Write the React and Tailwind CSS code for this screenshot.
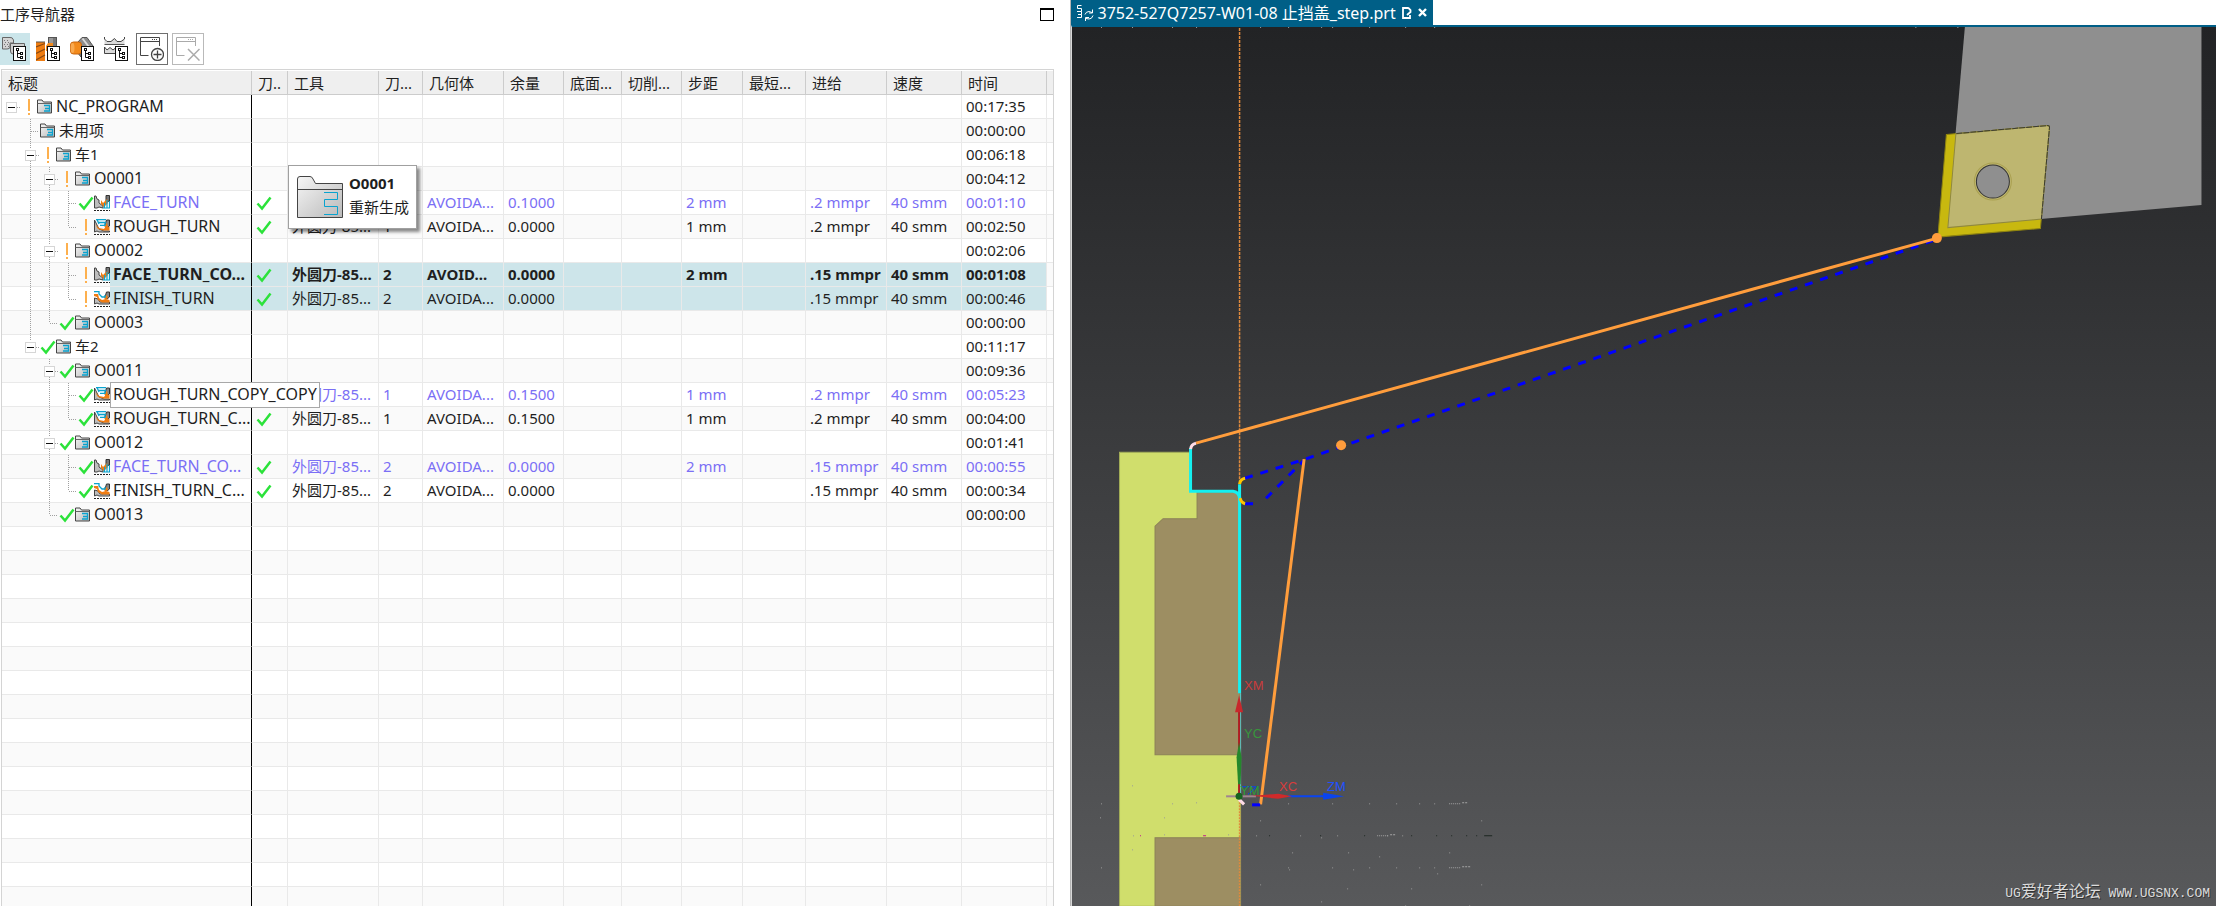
import { useState } from "react";

const columns = [
    { key: "title", label: "标题", width: "w-[250px]" },
    { key: "path", label: "刀..", width: "w-[36px]" },
    { key: "tool", label: "工具", width: "w-[91px]" },
    { key: "toolNo", label: "刀...", width: "w-[44px]" },
    { key: "geometry", label: "几何体", width: "w-[81px]" },
    { key: "stock", label: "余量", width: "w-[60px]" },
    { key: "floor", label: "底面...", width: "w-[58px]" },
    { key: "cut", label: "切削...", width: "w-[60px]" },
    { key: "step", label: "步距", width: "w-[61px]" },
    { key: "shortest", label: "最短...", width: "w-[63px]" },
    { key: "feed", label: "进给", width: "w-[81px]" },
    { key: "speed", label: "速度", width: "w-[75px]" },
    { key: "time", label: "时间", width: "w-[85px]" },
];

function op(title, icon, status, toolNo, stock, step, feed, time, extra) {
    return {
        title, icon, status, toolNo, stock, step, feed, time,
        tool: "外圆刀-85...",
        geometry: "AVOIDA...",
        speed: "40 smm",
        path: true,
        ...extra,
    };
}

const program = {
    title: "NC_PROGRAM", status: "warn", time: "00:17:35",
    children: [
        { title: "未用项", time: "00:00:00" },
        {
            title: "车1", status: "warn", time: "00:06:18",
            children: [
                {
                    title: "O0001", status: "warn", time: "00:04:12",
                    children: [
                        op("FACE_TURN", "face", "ok", "", "0.1000", "2 mm", ".2 mmpr", "00:01:10", { purple: true, tool: "" }),
                        op("ROUGH_TURN", "rough", "warn", "1", "0.0000", "1 mm", ".2 mmpr", "00:02:50"),
                    ],
                },
                {
                    title: "O0002", status: "warn", time: "00:02:06",
                    children: [
                        op("FACE_TURN_CO...", "face", "warn", "2", "0.0000", "2 mm", ".15 mmpr", "00:01:08", { bold: true, selected: true, geometry: "AVOID..." }),
                        op("FINISH_TURN", "finish", "warn", "2", "0.0000", "", ".15 mmpr", "00:00:46", { selected: true }),
                    ],
                },
                { title: "O0003", status: "ok", time: "00:00:00" },
            ],
        },
        {
            title: "车2", status: "ok", time: "00:11:17",
            children: [
                {
                    title: "O0011", status: "ok", time: "00:09:36",
                    children: [
                        op("ROUGH_TURN_COPY_COPY", "rough", "ok", "1", "0.1500", "1 mm", ".2 mmpr", "00:05:23", { purple: true, tip: true }),
                        op("ROUGH_TURN_C...", "rough", "ok", "1", "0.1500", "1 mm", ".2 mmpr", "00:04:00"),
                    ],
                },
                {
                    title: "O0012", status: "ok", time: "00:01:41",
                    children: [
                        op("FACE_TURN_CO...", "face", "ok", "2", "0.0000", "2 mm", ".15 mmpr", "00:00:55", { purple: true }),
                        op("FINISH_TURN_C...", "finish", "ok", "2", "0.0000", "", ".15 mmpr", "00:00:34"),
                    ],
                },
                { title: "O0013", status: "ok", time: "00:00:00" },
            ],
        },
    ],
};

const ROWS = 34;

// turns the tree into rows, each one knows which guide lines pass through it
function flatten(node, closed, id = "0", depth = 0, guides = [], last = true) {
    const rows = [{ ...node, id, depth, guides, last }];
    if (node.children && !closed[id]) {
        const next = depth === 0 ? [false] : [...guides, !last];
        node.children.forEach((child, i) => {
            rows.push(...flatten(child, closed, id + "." + i, depth + 1, next, i === node.children.length - 1));
        });
    }
    return rows;
}

function Check() {
    return (
        <svg width="16" height="16" viewBox="0 0 16 16" fill="none">
            <path d="M1.5 8.5 L6 13.5 L14.5 2.5" stroke="#2be23a" strokeWidth="2.5" />
        </svg>
    );
}

function Warn() {
    return (
        <svg width="16" height="16" viewBox="0 0 16 16" fill="#fdb04e">
            <rect x="7" y="0" width="2" height="12" />
            <rect x="7" y="14" width="2" height="2" />
        </svg>
    );
}

function Folder() {
    return (
        <svg width="15" height="15" viewBox="0 0 15 15">
            <defs>
                <linearGradient id="folder" x1="0" y1="0" x2="1" y2="1">
                    <stop offset="0" stopColor="#f6f6f6" />
                    <stop offset="1" stopColor="#b9b9b9" />
                </linearGradient>
            </defs>
            <path d="M.5 14 V1 H5 L6.5 3 H14.5 V14 Z" fill="url(#folder)" stroke="#444" />
            <path d="M.5 4.5 H14.5" stroke="#666" />
            <path d="M7 6.5 H12.5 V9.5 H8 M12.5 9.5 V12 H7" fill="none" stroke="#0aa3cf" strokeWidth="1.3" />
        </svg>
    );
}

function BigFolder() {
    return (
        <svg width="46" height="42" viewBox="0 0 46 42">
            <path d="M.5 41.5 V3 Q.5 .5 3 .5 H13 Q15 .5 16 3 L18.5 7.5 H45.5 V41.5 Z" fill="url(#folder)" stroke="#444" />
            <path d="M.5 13.5 H45.5" stroke="#444" />
            <path d="M27 16.5 H40.5 V23.5 H27.5 V30.5 H40.5 V38.5 H27" fill="none" stroke="#0aa3cf" />
        </svg>
    );
}

function OpIcon({ kind }) {
    return (
        <svg width="16" height="16" viewBox="0 0 16 16">
            {kind === "face" && (
                <>
                    <path d="M.5 13 V1 L2 1 L3 4 L5 5 V8 L9 11 V13 L5 12 L3 13 Z" fill="#bdbdbd" stroke="#444" />
                    <path d="M12 .5 H15.5 V6 L12 7 Z" fill="#777" stroke="#333" />
                    <path d="M7 5 L9 8 L13 4 L14 8 L10 12 L7 9 Z" fill="#f07c12" />
                    <path d="M10.5 13 V8 M13 13 V5 M15.5 13 V6 M9 13 H16" stroke="#0aa3cf" strokeWidth="1.2" />
                </>
            )}
            {kind === "rough" && (
                <>
                    <path d="M.5 13 V1 L3 6 L5 10 L10 12 H15.5 V13 H5 L3 12 Z" fill="#bdbdbd" stroke="#444" />
                    <path d="M12.5 1 H15.5 V7 L12 9 L11 6 Z" fill="#888" stroke="#333" />
                    <path d="M1 5 L5 9 L10 10 L12 7 L15.5 8 V11.5 H9 L4 10 Z" fill="#f07c12" />
                    <path d="M10 7 L13 4 L14 8 L12 9 Z" fill="#f07c12" />
                    <path d="M2 .7 H12 M4 3.5 H12 M6 6.3 H11 M3 .5 L5 5 M11 3 V7" stroke="#0aa3cf" fill="none" strokeWidth="1.3" />
                </>
            )}
            {kind === "finish" && (
                <>
                    <path d="M.5 13 V7 L4 8 L6 11 H15.5 V13 H5 L3 12 Z" fill="#bdbdbd" stroke="#444" />
                    <path d="M12.5 1 H15.5 V6 L13 8 L11 6 Z" fill="#888" stroke="#333" />
                    <path d="M0 3 H4 L5 7 L8 9 L12 8 L15.5 9 V11.5 H8 L4 9 L3 6 L0 5 Z" fill="#f07c12" />
                    <path d="M10 6 L13 4 L14 7 L11 9 Z" fill="#f07c12" />
                    <path d="M0 .7 H5 V3 L8 6 H11 V4" stroke="#0aa3cf" fill="none" strokeWidth="1.3" />
                </>
            )}
            <path d="M0 15.5 H16" stroke="#222" strokeDasharray="2 1" />
        </svg>
    );
}

function TreeBadge() {
    return (
        <>
            <rect x="11.5" y="9.5" width="12" height="14" fill="#fff" stroke="#111" />
            <path d="M15.5 13 V20.5 H19 M15.5 16.5 H19" fill="none" stroke="#111" />
            <rect x="14.5" y="11.5" width="2" height="2" fill="#fff" stroke="#111" />
            <rect x="18.5" y="15.5" width="2" height="2" fill="#fff" stroke="#111" />
            <rect x="18.5" y="19.5" width="2" height="2" fill="#fff" stroke="#111" />
        </>
    );
}

function ProgramViewIcon() {
    return (
        <svg width="24" height="24" viewBox="0 0 24 24">
            <path d="M.5 .5 H8 Q10.5 0 11.5 3 V6 H8 V10 Q8 12 5 12 H.5 Z" fill="#d4d4d4" stroke="#666" />
            <path d="M8.5 6.5 H22.5 V17 H11 Q8.5 17 8.5 14 Z" fill="#cfcfcf" stroke="#666" />
            <path d="M2 3.5 H8 M3 5.5 H8 M2 7.5 H7 M3 9.5 H7" stroke="#777" strokeDasharray="1 2" />
            <path d="M11 9.5 H21" stroke="#777" strokeDasharray="1 2" />
            <TreeBadge />
        </svg>
    );
}

function ToolViewIcon() {
    return (
        <svg width="24" height="24" viewBox="0 0 24 24">
            <rect x="12.5" y=".5" width="8" height="12" fill="#999" stroke="#555" />
            <path d="M17 1 H20 V10 H17 Z" fill="#777" />
            <path d="M10 9 L12 6 H17 V14 H10 Z" fill="#f28a1c" />
            <path d="M0 5 H9 V24 H0 Z" fill="#ef7d12" />
            <path d="M0 10 L9 6.5 M0 16.5 L9 12 M0 23 L9 18" stroke="#8a4a12" strokeWidth="1.3" />
            <path d="M0 5 H9" stroke="#555" />
            <TreeBadge />
        </svg>
    );
}

function GeometryViewIcon() {
    return (
        <svg width="24" height="24" viewBox="0 0 24 24">
            <path d="M8 5 L12 .5 H17 L23 9 V12 H11 V20 L7 15 Z" fill="#8c8c8c" stroke="#555" />
            <path d="M12.5 1.5 L19 10" stroke="#d8d8d8" strokeWidth="2" />
            <rect x=".5" y="5" width="11" height="12" rx="3" fill="#f28a1c" stroke="#c9640c" />
            <ellipse cx="2.5" cy="11" rx="2" ry="5" fill="#f9a94f" />
            <TreeBadge />
        </svg>
    );
}

function MethodViewIcon() {
    return (
        <svg width="24" height="24" viewBox="0 0 24 24">
            <path d="M.5 2 L3 4.5 H7 L10.5 1.5 L13 4.5 H17 L20.5 2 V7.5 H.5 Z" fill="#dcdcdc" />
            <path d="M.5 0 V2 L3 4.5 H7 L10.5 1.5 L13 4.5 H17 L20.5 2 V0" fill="none" stroke="#444" />
            <path d="M.5 7.5 H20.5" stroke="#555" />
            <path d="M.5 16.5 V10 L3 13 L6 10.5 L9 13 L12 10.5 V16.5 Z" fill="#dcdcdc" stroke="#444" />
            <TreeBadge />
        </svg>
    );
}

function WindowIcon({ kind }) {
    const color = kind === "add" ? "#444" : "#aaa";
    return (
        <svg width="24" height="24" viewBox="0 0 24 24" fill="none" stroke={color}>
            <path d="M8.5 18.5 H.5 V.5 H19.5 V9" />
            <path d="M.5 4.5 H19.5" />
            <path d="M12 2.5 H18" strokeDasharray="1 1" />
            {kind === "add" ? (
                <>
                    <circle cx="17.5" cy="17.5" r="6" strokeWidth="1.3" />
                    <path d="M17.5 13.5 V21.5 M13.5 17.5 H21.5" strokeWidth="1.3" />
                </>
            ) : (
                <path d="M12 12 L23.5 23.5 M23.5 12 L12 23.5" strokeWidth="1.5" />
            )}
        </svg>
    );
}

function Toolbar() {
    return (
        <div className="flex h-8 items-center gap-1">
            <div className="flex items-center gap-0.5">
                <button aria-label="程序顺序视图" className="flex h-8 w-[30px] items-center justify-end bg-[#cbe5ea] pr-1">
                    <ProgramViewIcon />
                </button>
                <button aria-label="机床视图" className="flex size-8 items-center justify-center"><ToolViewIcon /></button>
                <button aria-label="几何视图" className="flex size-8 items-center justify-center"><GeometryViewIcon /></button>
                <button aria-label="加工方法视图" className="flex size-8 items-center justify-center"><MethodViewIcon /></button>
            </div>
            <button aria-label="新建" className="flex size-8 items-center justify-center border border-[#6f6f6f]"><WindowIcon kind="add" /></button>
            <button aria-label="删除" disabled className="flex size-8 items-center justify-center border border-[#b9b9b9]"><WindowIcon kind="remove" /></button>
        </div>
    );
}

function Guide({ line }) {
    return (
        <svg width="19" height="23" className="shrink-0" stroke="#a0a0a0" strokeDasharray="1 1">
            {line && <path d="M9.5 0 V23" />}
        </svg>
    );
}

function NodeSlot({ row, onToggle }) {
    if (row.children) {
        return (
            <button aria-label={row.title} onClick={onToggle} className="shrink-0">
                <svg width="19" height="23" fill="none">
                    <g stroke="#a0a0a0" strokeDasharray="1 1">
                        {row.depth > 0 && <path d="M9.5 0 V6" />}
                        {!row.last && <path d="M9.5 18 V23" />}
                        <path d="M15 12.5 H19" />
                    </g>
                    <rect x="4.5" y="7.5" width="10" height="10" fill="#fff" stroke="#d6d6d6" />
                    <path d="M6 12.5 H13" stroke="#111" />
                </svg>
            </button>
        );
    }
    return (
        <svg width="19" height="23" className="shrink-0" fill="none" stroke="#a0a0a0" strokeDasharray="1 1">
            <path d={row.last ? "M9.5 0 V12" : "M9.5 0 V23"} />
            <path d="M10 12.5 H18" />
        </svg>
    );
}

function TitleCell({ row, onToggle }) {
    // latin names are set one size up from the chinese ones
    const latin = /^[A-Z]/.test(row.title);

    return (
        <div className={"flex h-[23px] items-center " + (latin ? "text-base" : "")}>
            {row.guides.map((line, i) => <Guide key={i} line={line} />)}
            <NodeSlot row={row} onToggle={onToggle} />
            {row.status && (
                <span className="w-4 shrink-0">{row.status === "ok" ? <Check /> : <Warn />}</span>
            )}
            <span className="w-4 shrink-0">{row.icon ? <OpIcon kind={row.icon} /> : <Folder />}</span>
            <span className={"relative h-full flex-1 pl-[3px] leading-[23px] " + (row.selected ? "bg-[#cde5ea]" : "")}>
                {row.tip ? (
                    <span className="absolute -top-px left-0 z-10 h-[26px] border border-[#a8a8a8] bg-white px-0.5 leading-[23px] text-[#1f1f1f]">{row.title}</span>
                ) : row.title}
            </span>
        </div>
    );
}

function OperationTable() {
    const [closed, setClosed] = useState({});
    const rows = flatten(program, closed);
    const filler = Array.from({ length: Math.max(0, ROWS - rows.length) }, (_, i) => ({ id: "empty" + i }));

    function toggle(id) {
        setClosed(prev => ({ ...prev, [id]: !prev[id] }));
    }

    return (
        <table className="w-full table-fixed border-separate border-spacing-0 whitespace-nowrap">
            <thead>
                <tr className="h-6 bg-[#efefef] text-left">
                    {columns.map(col => (
                        <th key={col.key} className={"overflow-hidden border-r border-b border-[#cccccc] p-0 pl-1.5 font-normal leading-[22px] " + col.width}>{col.label}</th>
                    ))}
                    <th className="border-b border-[#cccccc] p-0"></th>
                </tr>
            </thead>
            <tbody>
                {[...rows, ...filler].map((row, i) => (
                    <tr key={row.id} className={"h-6 " + (i % 2 ? "bg-[#fafafa] " : "bg-white ") + (row.purple ? "text-[#7b6ff5] " : "") + (row.bold ? "font-bold" : "")}>
                        <td className="border-r border-b border-r-black border-b-[#e9e9e9] p-0">
                            {row.title && <TitleCell row={row} onToggle={() => toggle(row.id)} />}
                        </td>
                        {columns.slice(1).map(col => (
                            <td key={col.key} className={"overflow-hidden border-r border-b border-[#e9e9e9] p-0 pl-1 leading-[23px] " + (row.selected ? "bg-[#cde5ea]" : "")}>
                                {col.key === "path" ? row.path && <Check /> : row[col.key]}
                            </td>
                        ))}
                        <td className="border-b border-[#e9e9e9] p-0"></td>
                    </tr>
                ))}
            </tbody>
        </table>
    );
}

function Navigator() {
    return (
        <section className="flex min-w-0 flex-[1070] flex-col overflow-hidden bg-white">
            <header className="flex h-[33px] items-start justify-between pr-4 pt-0.5">
                <h1 className="leading-6">工序导航器</h1>
                <button aria-label="最大化" className="mt-1.5 h-[13px] w-3.5 border border-t-2 border-black"></button>
            </header>
            <Toolbar />
            <div className="relative mt-1 mr-4 ml-px min-h-0 flex-1 border border-b-0 border-[#d4d4d4] p-px px-0">
                <OperationTable />
                <div className="absolute top-[95px] left-[286px] z-20 flex h-16 w-[129px] items-center gap-1.5 border border-[#a0a0a0] bg-white pl-2 shadow-[3px_3px_3px_rgba(0,0,0,0.45)]">
                    <BigFolder />
                    <div className="pb-1 leading-6">
                        <div className="font-bold">O0001</div>
                        <div>重新生成</div>
                    </div>
                </div>
            </div>
        </section>
    );
}

const specks = [
    [1132, 785], [1172, 803], [1196, 802], [1164, 817], [1164, 834], [1228, 834], [1132, 849], [1133, 835],
    [1288, 803], [1332, 803], [1369, 803], [1396, 803], [1419, 803], [1434, 803], [1260, 820], [1481, 820],
    [1256, 835], [1300, 835], [1337, 835], [1387, 835], [1402, 835], [1321, 837], [1292, 852], [1348, 852],
    [1449, 852], [1379, 856], [1101, 867], [1288, 867], [1289, 869], [1332, 867], [1353, 869], [1369, 867],
    [1396, 867], [1419, 867], [1434, 867], [1437, 873], [1260, 884], [1481, 884], [1347, 888], [1411, 888],
    [1321, 901], [1101, 803], [1100, 817], [1405, 905], [1469, 905],
    [1101, 27], [1132, 27], [1172, 27], [1196, 27], [1260, 27], [1288, 27], [1321, 27], [1332, 27], [1369, 27], [1405, 27],
    [1434, 27], [1915, 27], [1957, 27],
];

function Viewport() {
    return (
        <svg viewBox="1072 27 1144 879" preserveAspectRatio="xMinYMin slice" className="size-full" fontFamily="Liberation Sans, sans-serif" fontSize="13">
            <path d="M1239.5 28 V484" stroke="#e08a3c" strokeWidth="1.5" strokeDasharray="3 1" />

            {/* part section */}
            <path d="M1119.5 452 H1191 V491 H1236 L1240.5 496 V906 H1119.5 Z" fill="#d0de6c" stroke="#a3ad58" />
            <path d="M1197 492 H1240 V754.5 H1155 V526 L1163 518.5 H1197 Z" fill="#9d8e62" stroke="#8c8158" />
            <path d="M1155 837.5 H1240 V906 H1155 Z" fill="#9d8e62" stroke="#8c8158" />
            <path d="M1239.5 796 V906" stroke="#e08a3c" strokeWidth="1.5" strokeDasharray="2 1" />

            {/* holder and insert */}
            <path d="M1964.5 27 H2201 V205 L1947 227 Z" fill="#8f8f8f" />
            <path d="M1946 134.5 L2047 125.5 Q2049.5 125.5 2049 128 L2040 228.5 L1937.5 237 Z" fill="#c8b80f" stroke="#8f8410" />
            <path d="M1955.5 134 L2047 125.5 Q2049.5 125.5 2049 128 L2041 219 L1947.5 227.5 Z" fill="#beb670" stroke="#8f8840" />
            <path d="M1956 133.5 L2047 125.5 Q2049.5 125.5 2049 128 L2041 219" fill="none" stroke="#3c3c30" strokeDasharray="6 1" />
            <circle cx="1992.5" cy="181.5" r="18.5" fill="none" stroke="#aaa050" />
            <circle cx="1992.5" cy="181.5" r="16.5" fill="#8f8f8f" stroke="#333" />

            {/* tool path */}
            <g fill="none" strokeWidth="3">
                <path d="M1245 478 L1305 459 L1937 239" stroke="#0000ff" strokeDasharray="8 8" />
                <path d="M1245 503.5 H1253 M1266 498 L1304 460" stroke="#0000ff" strokeDasharray="8 8" />
                <path d="M1190.5 448 V491 H1233 Q1239.5 492 1239.5 499 V693 M1239.5 484 V498" stroke="#14f0f0" />
                <path d="M1239.5 484 Q1240 479 1245 478 M1240 498 Q1241 502.5 1245 503.5" stroke="#ffc400" />
                <path d="M1190.5 449 Q1191 444 1196 443" stroke="#ffdce6" />
                <path d="M1196 443 L1937 238" stroke="#ff9d3c" />
                <path d="M1304 459 L1260.5 804" stroke="#ff9d3c" />
                <path d="M1239 799 L1244 804" stroke="#ffdce6" />
                <path d="M1252 804.5 H1260" stroke="#0000ff" />
            </g>
            <circle cx="1341" cy="445" r="5" fill="#ff9d3c" />
            <circle cx="1936.5" cy="238" r="5" fill="#ff9d3c" />

            {/* coordinate triads */}
            <path d="M1240.5 693 V796" stroke="#55c8c8" />
            <path d="M1239 796 V710" stroke="#b01c22" strokeWidth="2" />
            <path d="M1239 695 L1243 712 H1235 Z" fill="#c8282c" />
            <path d="M1239 742 L1241.5 757 L1240.5 784 H1238 L1236.5 757 Z" fill="#24882c" />
            <path d="M1226 796 H1256" stroke="#a08590" strokeWidth="2" />
            <path d="M1288 796 H1325" stroke="#0a44f0" strokeWidth="2" />
            <path d="M1344 796 L1323 799.5 V792.5 Z" fill="#0a44f0" />
            <path d="M1252 795.5 L1278 793.5 L1292 796 L1278 798.5 Z" fill="#d02a2a" />
            <path d="M1242 786.5 H1257 M1248 794 L1256 787" stroke="#0a44f0" />
            <text x="1240" y="795" fill="#2f9a38">YM</text>
            <circle cx="1239" cy="796" r="3.5" fill="#17641f" />
            <text x="1244" y="690" fill="#c83c3c">XM</text>
            <text x="1244" y="738" fill="#38963c">YC</text>
            <text x="1279" y="791" fill="#d83c3c">XC</text>
            <text x="1327" y="791" fill="#1e50ff">ZM</text>

            {/* leftover display specks */}
            {specks.map(([x, y]) => <rect key={x + "-" + y} x={x} y={y} width="1" height="1" fill="#9a9a9a" />)}
            <path d="M1449 803.5 H1460 M1449 867.5 H1460 M1377 835.5 H1388" stroke="#a5a5a5" strokeDasharray="1 1" />
            <path d="M1462 802.5 H1467 M1462 866.5 H1470 M1390 834.5 H1395" stroke="#a5a5a5" strokeDasharray="2 1" />
            <path d="M1269 835.5 h1 M1320 835.5 h1 M1364 835.5 h1 M1411 835.5 h1 M1436 835.5 h1 M1451 835.5 h1 M1466 835.5 h1 M1476 835.5 h1 M1484 835.5 h8" stroke="#1c2620" />
            <path d="M1140 835.5 h1 M1203 835.5 h3" stroke="#c01890" />
        </svg>
    );
}

function Tab() {
    return (
        <div className="flex h-[25px] w-fit items-center bg-[#005f87] px-1.5 text-base text-white">
            <svg width="17" height="16" viewBox="0 0 17 16" fill="none" stroke="#fff" className="mr-1">
                <path d="M4.5 .5 H.5 V3.5 H4.5 V6.5 H0 M4.5 6.5 V9.5 H1 M4.5 9.5 V12.5 H0" />
                <path d="M8 9.5 Q9 6.5 12 6.5 L15 7.5 M15.5 4.5 V8 H12 M16 10.5 Q15 14 12 14 L9 13.5 M8.5 16 V12.5 H12" />
            </svg>
            <span className="leading-[22px]">3752-527Q7257-W01-08 止挡盖_step.prt</span>
            <svg width="10" height="12" viewBox="0 0 10 12" fill="none" stroke="#fff" className="ml-1.5 shrink-0">
                <path d="M6 1 H1 V11 H8 V8" strokeWidth="1.8" />
                <path d="M6 .5 L8.5 3 V5 L5 8" strokeWidth="1.8" />
            </svg>
            <button aria-label="关闭" className="ml-1.5">
                <svg width="9" height="9" viewBox="0 0 9 9" stroke="#fff" strokeWidth="2.4">
                    <path d="M1 1 L8 8 M8 1 L1 8" />
                </svg>
            </button>
        </div>
    );
}

export default function App() {
    return (
        <main className="flex h-screen overflow-hidden bg-white font-['Noto_Sans','Noto_Sans_CJK_SC',sans-serif] text-[15px] text-[#1f1f1f]">
            <Navigator />
            <section className="relative flex min-w-0 flex-[1146] flex-col border-l border-[#b4b4b4]">
                <Tab />
                <div className="min-h-0 flex-1 border-t-2 border-l border-t-[#005f87] border-l-[#d8d8d8] bg-linear-to-b from-[#222325] to-[#58595b]">
                    <Viewport />
                </div>
                <p className="absolute right-1.5 bottom-0.5 font-['Liberation_Mono','Noto_Sans_CJK_SC',monospace] text-[13px] leading-5 text-[#dcdcdc] [text-shadow:1px_1px_0_#333]">
                    UG<span className="text-base leading-5">爱好者论坛</span> WWW.UGSNX.COM
                </p>
            </section>
        </main>
    );
}
